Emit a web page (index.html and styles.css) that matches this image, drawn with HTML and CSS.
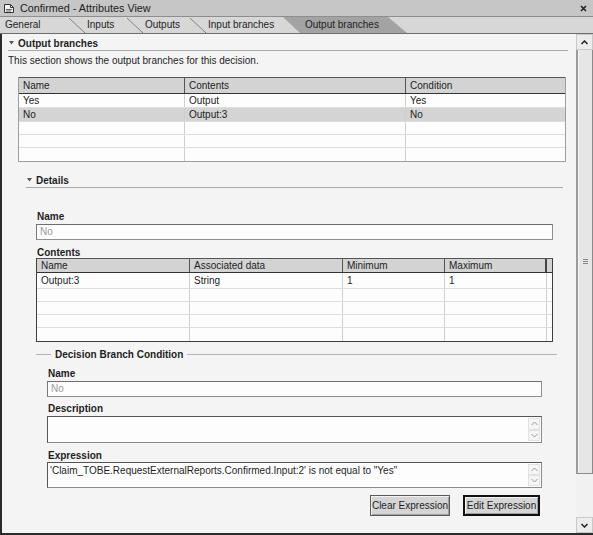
FILE: index.html
```html
<!DOCTYPE html>
<html>
<head>
<meta charset="utf-8">
<title>Confirmed - Attributes View</title>
<link rel="stylesheet" href="styles.css">
</head>
<body>
<div class="window">
  <div class="titlebar">
    <svg class="title-icon" width="12" height="11" viewBox="0 0 12 11"><path d="M1.5 1.5h6l3 3v5h-9z" fill="#f4f4f4" stroke="#333"/><path d="M7.5 1.5v3h3" fill="none" stroke="#333"/><path d="M3 6.5h6M3 8h5" stroke="#666"/></svg>
    <span class="title">Confirmed - Attributes View</span>
    <svg class="close" width="7" height="7" viewBox="0 0 7 7"><path d="M1 1l5 5M6 1l-5 5" stroke="#222" stroke-width="1.6"/></svg>
  </div>
  <div class="tabs">
    <div class="tab tab-general">General</div>
    <div class="tab tab-inputs">Inputs</div>
    <div class="tab tab-outputs">Outputs</div>
    <div class="tab tab-inbr">Input branches</div>
    <div class="tab tab-active">Output branches</div>
  </div>
  <div class="main">
    <div class="content">
      <div class="sec-head"><svg class="twisty" width="10" height="6" viewBox="0 0 10 6"><path d="M1 1h5l-2.5 3.5z" fill="#555"/></svg>Output branches</div>
      <p class="desc">This section shows the output branches for this decision.</p>

      <div class="grid grid-out">
        <div class="row head"><div>Name</div><div>Contents</div><div>Condition</div></div>
        <div class="row r14"><div>Yes</div><div>Output</div><div>Yes</div></div>
        <div class="row r14 sel"><div>No</div><div>Output:3</div><div>No</div></div>
        <div class="row"><div></div><div></div><div></div></div>
        <div class="row"><div></div><div></div><div></div></div>
        <div class="row last"><div></div><div></div><div></div></div>
      </div>

      <div class="sub-head"><svg class="twisty" width="10" height="6" viewBox="0 0 10 6"><path d="M1 1h5l-2.5 3.5z" fill="#555"/></svg>Details</div>

      <div class="details">
        <div class="label lbl-name">Name</div>
        <div class="field field-name">No</div>
        <div class="label lbl-contents">Contents</div>
        <div class="grid grid-det">
          <div class="row head"><div>Name</div><div>Associated data</div><div>Minimum</div><div>Maximum</div><div class="filler"></div></div>
          <div class="row first"><div>Output:3</div><div>String</div><div>1</div><div>1</div><div class="filler"></div></div>
          <div class="row"><div></div><div></div><div></div><div></div><div class="filler"></div></div>
          <div class="row"><div></div><div></div><div></div><div></div><div class="filler"></div></div>
          <div class="row"><div></div><div></div><div></div><div></div><div class="filler"></div></div>
          <div class="row last"><div></div><div></div><div></div><div></div><div class="filler"></div></div>
        </div>

        <div class="group-head">Decision Branch Condition</div>

        <div class="cond">
          <div class="label lbl-cname">Name</div>
          <div class="field field-cname">No</div>
          <div class="label lbl-desc">Description</div>
          <div class="field area area-desc">
            <span class="area-text"></span>
            <span class="spin">
              <span class="spin-btn"><svg width="7" height="5" viewBox="0 0 7 5"><path d="M0.5 4l3-3 3 3" fill="none" stroke="#9a9a9a"/></svg></span>
              <span class="spin-btn"><svg width="7" height="5" viewBox="0 0 7 5"><path d="M0.5 1l3 3 3-3" fill="none" stroke="#9a9a9a"/></svg></span>
            </span>
          </div>
          <div class="label lbl-expr">Expression</div>
          <div class="field area area-expr">
            <span class="area-text">'Claim_TOBE.RequestExternalReports.Confirmed.Input:2' is not equal to "Yes"</span>
            <span class="spin">
              <span class="spin-btn"><svg width="7" height="5" viewBox="0 0 7 5"><path d="M0.5 4l3-3 3 3" fill="none" stroke="#9a9a9a"/></svg></span>
              <span class="spin-btn"><svg width="7" height="5" viewBox="0 0 7 5"><path d="M0.5 1l3 3 3-3" fill="none" stroke="#9a9a9a"/></svg></span>
            </span>
          </div>
          <div class="buttons">
            <button class="btn btn-clear">Clear Expression</button>
            <button class="btn btn-default">Edit Expression</button>
          </div>
        </div>
      </div>
    </div>
    <div class="scrollbar">
      <div class="sb-arrow"><svg width="7" height="5" viewBox="0 0 7 5"><path d="M0.5 4l3-3 3 3" fill="none" stroke="#222" stroke-width="1.5"/></svg></div>
      <div class="sb-thumb"><svg width="5" height="5" viewBox="0 0 5 5"><path d="M0 0.5h5M0 2.5h5M0 4.5h5" stroke="#888"/></svg></div>
      <div class="sb-track"></div>
      <div class="sb-arrow"><svg width="7" height="5" viewBox="0 0 7 5"><path d="M0.5 1l3 3 3-3" fill="none" stroke="#222" stroke-width="1.5"/></svg></div>
    </div>
  </div>
</div>
</body>
</html>
```

FILE: styles.css
```css
* { box-sizing: border-box; }

html, body {
  margin: 0;
  padding: 0;
  background: #f3f3f3;
}

body {
  font-family: "Liberation Sans", Arial, sans-serif;
  font-size: 10px;
  color: #1e1e1e;
}

.window {
  width: 593px;
  height: 535px;
  display: flex;
  flex-direction: column;
  overflow: hidden;
  background: #f3f3f3;
}

/* title bar */
.titlebar {
  height: 17px;
  background: #c6c6c6;
  border-bottom: 1px solid #8e8e8e;
  display: flex;
  align-items: center;
  padding-left: 3px;
}
.title-icon { flex: none; }
.title {
  margin-left: 5px;
  font-size: 10.8px;
  color: #202020;
  flex: 1;
}
.close { margin-right: 6px; }

/* tabs */
.tabs {
  height: 17px;
  background: #d7d7d7;
  border-bottom: 1px solid #6e6e6e;
  display: flex;
}
.tab {
  position: relative;
  height: 16px;
  line-height: 15px;
  padding-left: 5px;
  color: #1e1e1e;
  flex: none;
}
.tab::after {
  content: "";
  position: absolute;
  top: 1px;
  right: -3px;
  width: 16px;
  height: 15px;
  background: linear-gradient(to top right, transparent calc(50% - 0.7px), #7e7e7e 50%, transparent calc(50% + 0.7px));
}
.tab-general { width: 82px; }
.tab-inputs { width: 58px; }
.tab-outputs { width: 63px; }
.tab-inbr { width: 80px; }
.tab-inbr::after { display: none; }
.tab-active {
  width: 124px;
  padding-left: 22px;
  background: #a3a3a3;
  clip-path: polygon(0 0, 105px 0, 124px 16px, 17px 16px);
}
.tab-active::after { display: none; }

/* main area */
.main {
  flex: 1;
  display: flex;
  border-left: 2px solid #2b2b2b;
  border-bottom: 2px solid #2b2b2b;
  min-height: 0;
}
.content {
  flex: 1;
  padding-top: 3px;
  background: #f4f4f4;
}

.twisty {
  display: inline-block;
  vertical-align: 1px;
}

.sec-head {
  margin-left: 6px;
  width: 560px;
  height: 14px;
  line-height: 13px;
  font-weight: bold;
  border-bottom: 1px solid #a9a9a9;
}

.desc {
  margin: 3px 0 0 6px;
  line-height: 13px;
}

/* grids */
.grid {
  background: #fdfdfd;
}
.grid .row {
  display: grid;
  height: 13px;
  border-bottom: 1px solid #dedede;
}
.grid .row > div {
  border-right: 1px solid #cfcfcf;
  padding-left: 4px;
  line-height: 12px;
  overflow: hidden;
  white-space: nowrap;
}
.grid .row > div:last-child { border-right: none; }
.grid .row.head {
  background: #d3d3d3;
  border-top: 1px solid #555;
  border-bottom: 1px solid #333;
}
.grid .row.head > div { border-right-color: #555; }
.grid .row.sel { background: #d4d4d4; }
.grid .row.last { border-bottom: none; }

.grid-out {
  margin: 10px 0 0 16px;
  width: 548px;
  border-left: 1px solid #9d9d9d;
  border-right: 1px solid #9d9d9d;
  border-bottom: 1px solid #9d9d9d;
}
.grid-out .row { grid-template-columns: 166px 221px 1fr; }
.grid-out .row.head { height: 17px; }
.grid-out .row.head > div { line-height: 15px; }
.grid-out .row.r14 { height: 14px; }
.grid-out .row.r14 > div { line-height: 13px; }

.sub-head {
  margin: 12px 0 0 24px;
  width: 537px;
  height: 14px;
  line-height: 13px;
  font-weight: bold;
  border-bottom: 1px solid #a9a9a9;
}

.details {
  margin-left: 34px;
  width: 519px;
}

.label {
  font-weight: bold;
  line-height: 11px;
  height: 11px;
  padding-left: 1px;
}
.lbl-name { margin-top: 23px; }
.field {
  background: #fdfdfd;
  border: 1px solid #8f8f8f;
  border-top-color: #6f6f6f;
  border-left-color: #7a7a7a;
  height: 16px;
  line-height: 14px;
  padding-left: 3px;
  color: #9a9a9a;
}
.field-name { margin-top: 2px; width: 517px; }
.lbl-contents { margin-top: 7px; }

.grid-det {
  width: 517px;
  border: 1px solid #3e3e3e;
  border-top: none;
}
.grid-det .row { grid-template-columns: 153px 153px 102px 102px 1fr; }
.grid-det .row.head { height: 15px; }
.grid-det .row.head > div { line-height: 13px; }
.grid-det .row.head > div:nth-child(4) { border-right: 2px solid #444; }
.grid-det .row.first { height: 16px; }
.grid-det .row.first > div { line-height: 15px; }
.grid-det .row > div.filler { padding: 0; }

.group-head {
  display: flex;
  align-items: center;
  gap: 4px;
  margin-top: 6px;
  width: 521px;
  height: 13px;
  font-weight: bold;
}
.group-head::before {
  content: "";
  width: 15px;
  border-top: 1px solid #b3b3b3;
}
.group-head::after {
  content: "";
  flex: 1;
  border-top: 1px solid #b3b3b3;
}

.cond {
  margin-left: 11px;
  width: 495px;
}
.lbl-cname { margin-top: 7px; }
.field-cname { margin-top: 2px; width: 495px; }
.lbl-desc { margin-top: 6px; }
.area {
  display: flex;
  color: #1e1e1e;
  border-color: #555;
  border-bottom-color: #8a8a8a;
  border-right-color: #8a8a8a;
  padding-left: 2px;
}
.area-desc { margin-top: 2px; height: 27px; }
.lbl-expr { margin-top: 7px; }
.area-expr { margin-top: 1px; height: 26px; }
.area-text {
  flex: 1;
  line-height: 13px;
  padding-top: 1px;
  white-space: nowrap;
}
.spin {
  display: flex;
  flex-direction: column;
  width: 13px;
  padding: 1px 1px 1px 0;
}
.spin-btn {
  flex: 1;
  display: flex;
  align-items: center;
  justify-content: center;
  background: #f5f5f5;
  border: 1px solid #e2e2e2;
}

.buttons {
  display: flex;
  justify-content: flex-end;
  gap: 13px;
  margin-top: 7px;
  padding-right: 2px;
}
.btn {
  font-family: "Liberation Sans", Arial, sans-serif;
  font-size: 10px;
  color: #1e1e1e;
  height: 21px;
  padding: 0;
  white-space: nowrap;
  background: #d5d5d5;
  border: 1px solid #5a5a5a;
  box-shadow: inset 1px 1px 0 #f2f2f2, inset -1px -1px 0 #a0a0a0;
}
.btn-clear { width: 80px; }
.btn-default {
  width: 77px;
  border: 2px solid #111;
}

/* scrollbar */
.scrollbar {
  width: 17px;
  display: flex;
  flex-direction: column;
  background: #e3e3e3;
}
.sb-arrow {
  height: 16px;
  display: flex;
  align-items: center;
  justify-content: center;
  background: #ececec;
  border: 1px solid #c9c9c9;
}
.sb-thumb {
  height: 424px;
  display: flex;
  align-items: center;
  justify-content: center;
  background: #e6e6e6;
  border-left: 2px solid #9a9a9a;
  border-right: 1px solid #8a8a8a;
  border-bottom: 1px solid #8a8a8a;
  box-shadow: inset 1px 0 0 #f6f6f6;
}
.sb-track {
  flex: 1;
  background: #f1f1f1;
}
```
